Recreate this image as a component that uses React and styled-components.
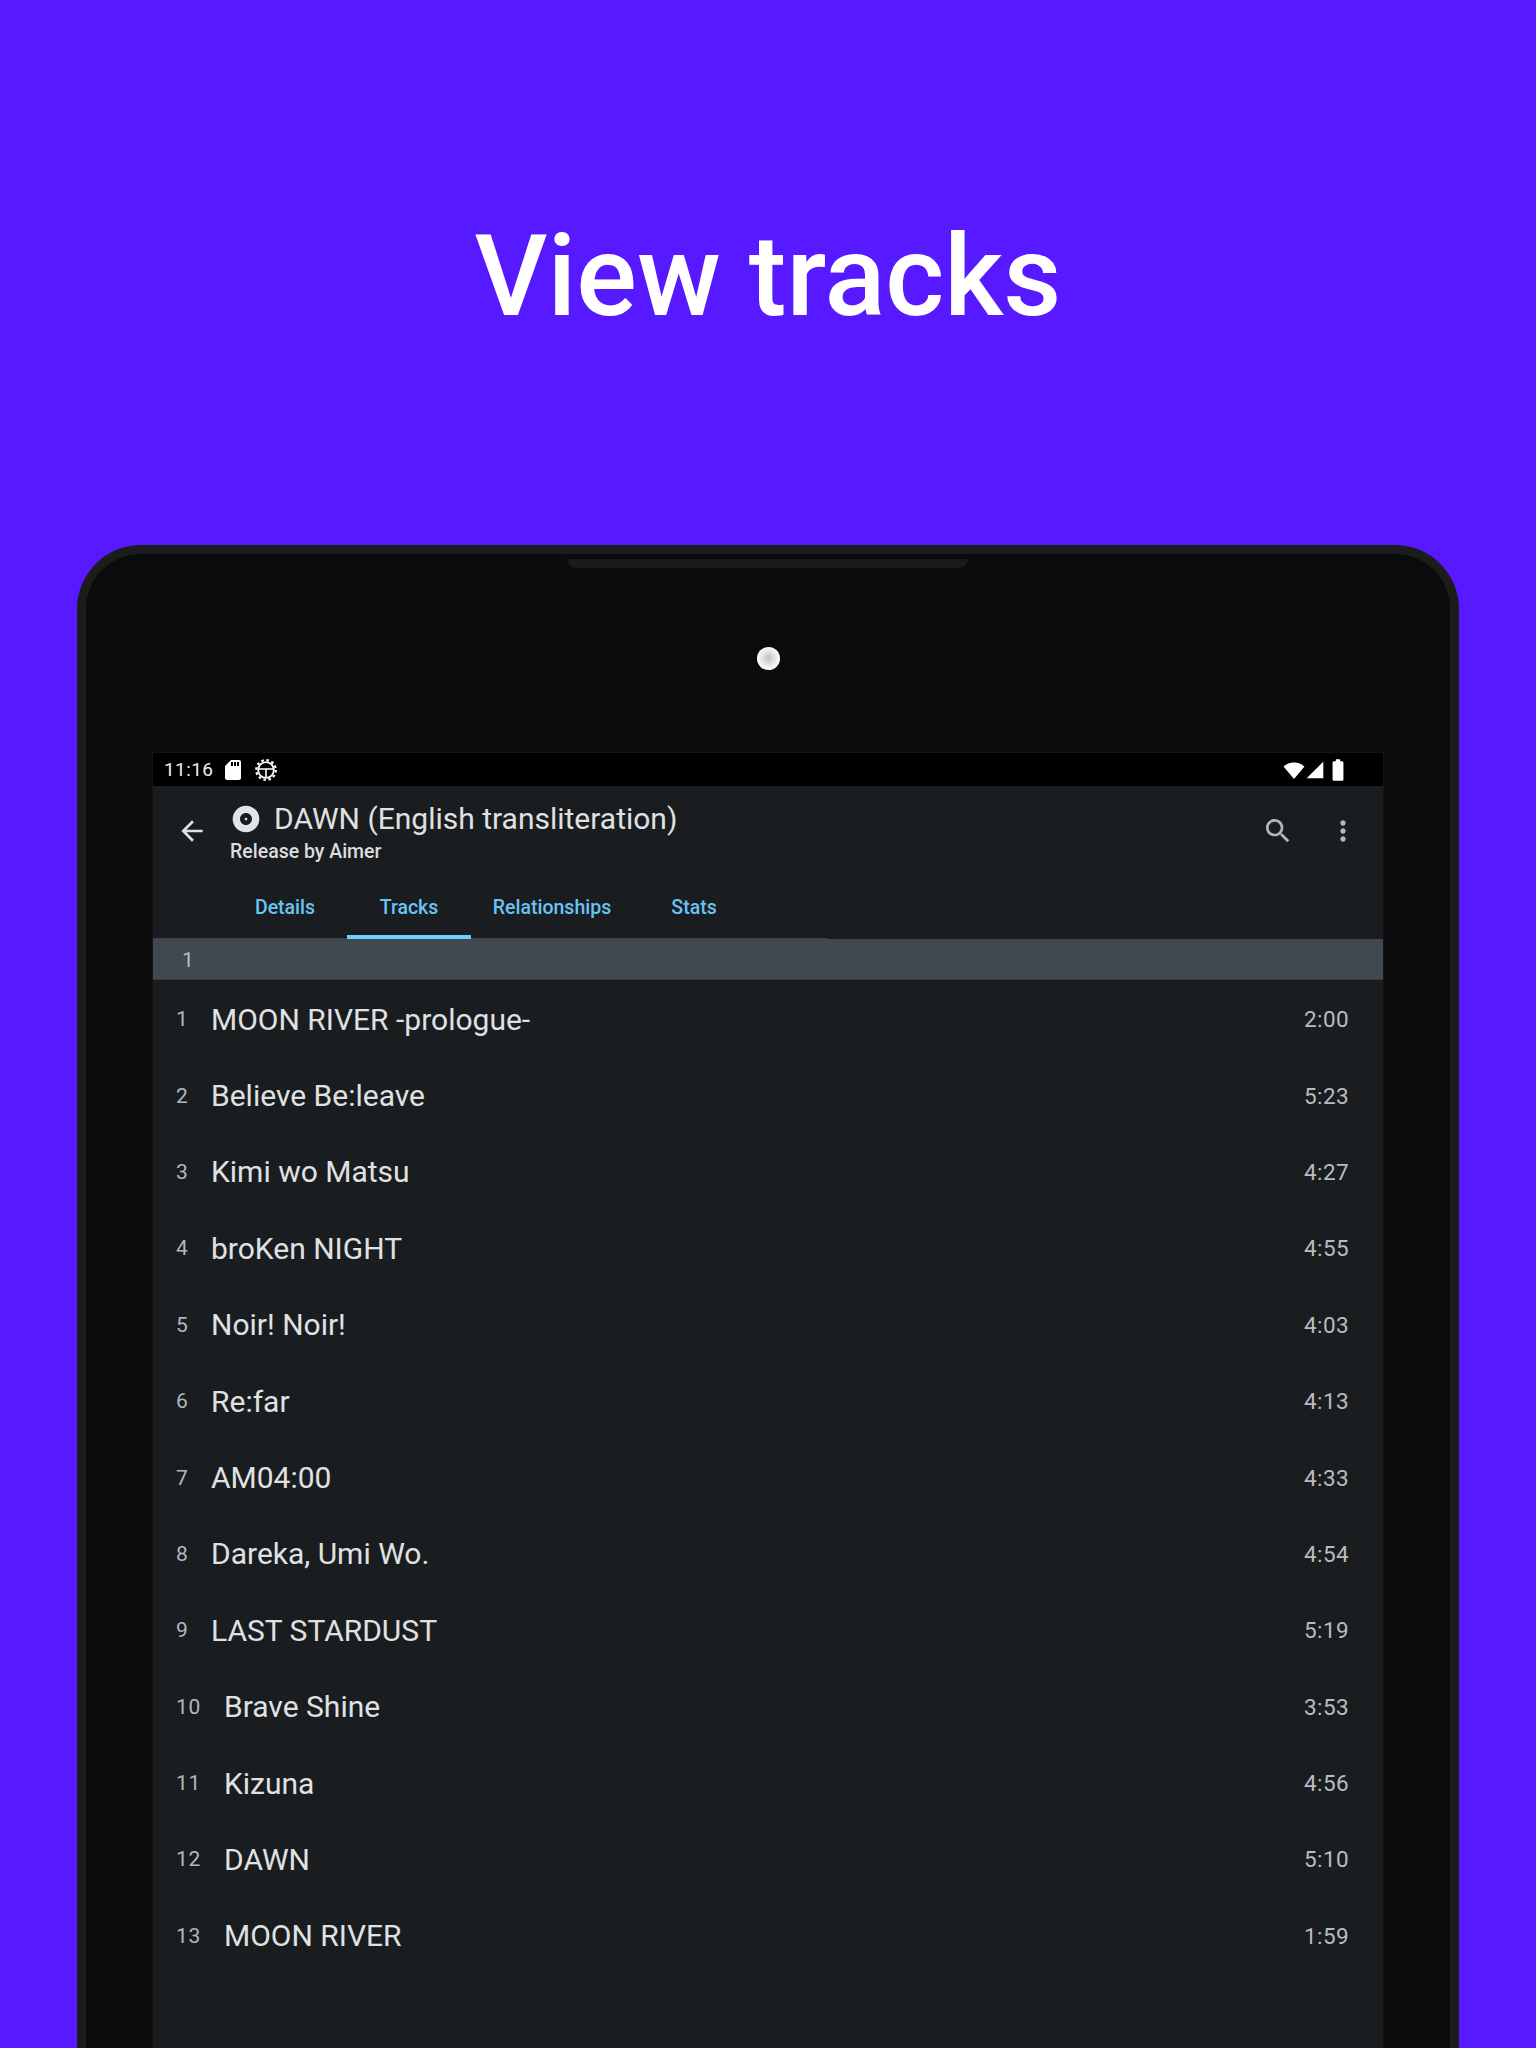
import styled, { createGlobalStyle } from "styled-components"

const GlobalStyle = createGlobalStyle`
  html, body {
    margin: 0;
    padding: 0;
    background: #5719ff;
    font-family: Roboto, "Liberation Sans", sans-serif;
  }
`
const Page = styled.div`
  width: 1536px;
  height: 2048px;
  overflow: hidden;
  background: #5719ff;
`
const Hero = styled.div`
  height: 545px;
  padding-top: 207px;
  box-sizing: border-box;
  text-align: center;
`
const Headline = styled.h1`
  margin: 0;
  font-size: 113px;
  line-height: 140px;
  font-weight: 500;
  color: #fff;
`
const Device = styled.div`
  position: relative;
  width: 1382px;
  height: 1600px;
  margin: 0 auto;
  box-sizing: border-box;
  border: 9px solid #1c1c1c;
  border-bottom: 0;
  border-radius: 64px 64px 0 0;
  background: #0b0b0b;
  padding-top: 93px;
`
const Speaker = styled.div`
  position: absolute;
  top: 5px;
  left: 481px;
  width: 401px;
  height: 9px;
  border-radius: 0 0 10px 10px;
  background: #1a1a1a;
`
const Camera = styled.div`
  width: 23px;
  height: 23px;
  margin: 0 auto 83px;
  border-radius: 50%;
  background: radial-gradient(circle at 50% 48%, #bdbdbd 0, #d8d8d8 25%, #fff 70%);
`
const Screen = styled.div`
  margin: 0 67px;
  height: 1400px;
  background: #191d20;
  box-shadow: 0 0 0 1px #141414;
`
const StatusBar = styled.div`
  height: 33px;
  background: #000;
  display: flex;
  align-items: center;
  padding: 0 32px 0 11px;
  color: #eee;
`
const Clock = styled.span`
  font-size: 19px;
  letter-spacing: 0.4px;
  margin-right: 8px;
`
const StatusIcon = styled.svg`
  display: block;
  width: ${p => p.$size || 24}px;
  height: ${p => p.$size || 24}px;
  margin-right: ${p => p.$gap || 0}px;
  fill: #fff;
`
const Spacer = styled.div`
  flex: 1;
`
const Toolbar = styled.div`
  height: 90px;
  display: flex;
  align-items: center;
  padding: 0 24px 0 23px;
`
const ToolIcon = styled.svg`
  display: block;
  width: ${p => p.$size || 32}px;
  height: ${p => p.$size || 32}px;
  fill: ${p => p.$color || "#b3b7ba"};
`
const TitleBlock = styled.div`
  margin-left: 22px;
  flex: 1;
`
const TitleRow = styled.div`
  display: flex;
  align-items: center;
  height: 38px;
`
const AppTitle = styled.div`
  font-size: 30px;
  color: #e0e1e2;
  margin-left: 12px;
`
const Subtitle = styled.div`
  font-size: 19.5px;
  font-weight: 500;
  color: #dcdddf;
  margin-top: 2px;
`
const ToolButtons = styled.div`
  display: flex;
  align-items: center;
  gap: 33px;
`
const TabBar = styled.div`
  height: 63px;
  width: 674px;
  box-sizing: border-box;
  display: flex;
  padding-left: 70px;
  border-bottom: 1px solid #3c3f46;
`
const Tab = styled.div`
  position: relative;
  width: ${p => p.$w}px;
  height: 63px;
  box-sizing: border-box;
  flex-shrink: 0;
  padding-top: 20px;
  text-align: center;
  font-size: 19.5px;
  font-weight: 500;
  color: #69c4f2;
  border-bottom: ${p => (p.$active ? "4px solid #6fcdfb" : "0")};
`
const GroupHeader = styled.div`
  height: 41px;
  box-sizing: border-box;
  background: #41484f;
  border-bottom: 1px solid #343a40;
  display: flex;
  align-items: center;
  padding: 1px 0 0 29px;
  font-size: 21px;
  color: #b9bcc0;
`
const TrackList = styled.div`
  padding-top: 1px;
`
const Track = styled.div`
  height: 76.4px;
  display: flex;
  align-items: center;
  padding: 0 34px 0 23px;
`
const TrackNo = styled.span`
  font-size: 21px;
  color: #b5b8bb;
  width: ${p => (p.$wide ? 48 : 35)}px;
  letter-spacing: 0.7px;
`
const TrackName = styled.span`
  flex: 1;
  font-size: 30px;
  color: #e0e1e2;
`
const Duration = styled.span`
  font-size: 22.5px;
  letter-spacing: 0.4px;
  color: #b9bcbe;
`

const tracks = [
  ["MOON RIVER -prologue-", "2:00"],
  ["Believe Be:leave", "5:23"],
  ["Kimi wo Matsu", "4:27"],
  ["broKen NIGHT", "4:55"],
  ["Noir! Noir!", "4:03"],
  ["Re:far", "4:13"],
  ["AM04:00", "4:33"],
  ["Dareka, Umi Wo.", "4:54"],
  ["LAST STARDUST", "5:19"],
  ["Brave Shine", "3:53"],
  ["Kizuna", "4:56"],
  ["DAWN", "5:10"],
  ["MOON RIVER", "1:59"],
]

const tabs = [
  { name: "Details", w: 124 },
  { name: "Tracks", w: 124, active: true },
  { name: "Relationships", w: 162 },
  { name: "Stats", w: 122 },
]

const App = () => {
  return (
    <Page>
      <GlobalStyle />
      <Hero>
        <Headline>View tracks</Headline>
      </Hero>
      <Device>
        <Speaker />
        <Camera />
        <Screen>
          <StatusBar>
            <Clock>11:16</Clock>
            <StatusIcon $size={24} $gap={9} viewBox="0 0 24 24">
              <path d="M18 2h-8L4.020 8 4 20c0 1.100.9 2 2 2h12c1.100 0 2-.9 2-2V4c0-1.100-.9-2-2-2zm-6 6h-2V4h2v4zm3 0h-2V4h2v4zm3 0h-2V4h2v4z" />
            </StatusIcon>
            <StatusIcon $size={24} viewBox="0 0 24 24">
              <circle cx="12" cy="12" r="9.800" fill="none" stroke="#fff" strokeWidth="2.200" strokeDasharray="2.570 2.570" />
              <circle cx="12" cy="12" r="7.800" fill="none" stroke="#fff" strokeWidth="1.800" />
              <path d="M4.500 10.200h15v1.600h-15zM11.200 10.200h1.600v9h-1.600z" />
            </StatusIcon>
            <Spacer />
            <StatusIcon $size={24} $gap={-1} viewBox="0 0 24 24">
              <path d="M12 21L1.500 8.500C4.500 6 8 4.500 12 4.500s7.500 1.500 10.500 4z" />
            </StatusIcon>
            <StatusIcon $size={20} viewBox="0 0 24 24">
              <path d="M2 22h20V2z" />
            </StatusIcon>
            <StatusIcon $size={26} viewBox="0 0 24 24">
              <path d="M15.670 4H14V2h-4v2H8.330C7.600 4 7 4.600 7 5.330v15.340C7 21.400 7.600 22 8.330 22h7.340c.73 0 1.330-.6 1.330-1.330V5.330C17 4.600 16.400 4 15.670 4z" />
            </StatusIcon>
          </StatusBar>
          <Toolbar>
            <ToolIcon $color="#dfe0e1" viewBox="0 0 24 24">
              <path d="M20 11H7.830l5.590-5.590L12 4l-8 8 8 8 1.410-1.410L7.830 13H20v-2z" />
            </ToolIcon>
            <TitleBlock>
              <TitleRow>
                <ToolIcon $color="#e3e4e5" viewBox="0 0 24 24">
                  <path d="M12 2C6.480 2 2 6.480 2 12s4.480 10 10 10 10-4.480 10-10S17.520 2 12 2zm0 14.500c-2.490 0-4.500-2.010-4.500-4.500S9.510 7.500 12 7.500s4.500 2.010 4.500 4.500-2.010 4.500-4.500 4.500zm0-5.500c-.55 0-1 .45-1 1s.45 1 1 1 1-.45 1-1-.45-1-1-1z" />
                </ToolIcon>
                <AppTitle>DAWN (English transliteration)</AppTitle>
              </TitleRow>
              <Subtitle>Release by Aimer</Subtitle>
            </TitleBlock>
            <ToolButtons>
              <ToolIcon viewBox="0 0 24 24">
                <path d="M15.500 14h-.79l-.28-.27C15.410 12.590 16 11.110 16 9.500 16 5.910 13.090 3 9.500 3S3 5.910 3 9.500 5.910 16 9.500 16c1.610 0 3.090-.59 4.230-1.570l.27.28v.79l5 4.990L20.490 19l-4.990-5zm-6 0C7.010 14 5 11.990 5 9.500S7.010 5 9.500 5 14 7.010 14 9.500 11.990 14 9.500 14z" />
              </ToolIcon>
              <ToolIcon viewBox="0 0 24 24">
                <path d="M12 8c1.100 0 2-.9 2-2s-.9-2-2-2-2 .9-2 2 .9 2 2 2zm0 2c-1.100 0-2 .9-2 2s.9 2 2 2 2-.9 2-2-.9-2-2-2zm0 6c-1.100 0-2 .9-2 2s.9 2 2 2 2-.9 2-2-.9-2-2-2z" />
              </ToolIcon>
            </ToolButtons>
          </Toolbar>
          <TabBar>
            {tabs.map(t => (
              <Tab key={t.name} $w={t.w} $active={t.active}>{t.name}</Tab>
            ))}
          </TabBar>
          <GroupHeader>1</GroupHeader>
          <TrackList>
            {tracks.map(([name, time], i) => (
              <Track key={name}>
                <TrackNo $wide={i >= 9}>{i + 1}</TrackNo>
                <TrackName>{name}</TrackName>
                <Duration>{time}</Duration>
              </Track>
            ))}
          </TrackList>
        </Screen>
      </Device>
    </Page>
  )
}

export default App
